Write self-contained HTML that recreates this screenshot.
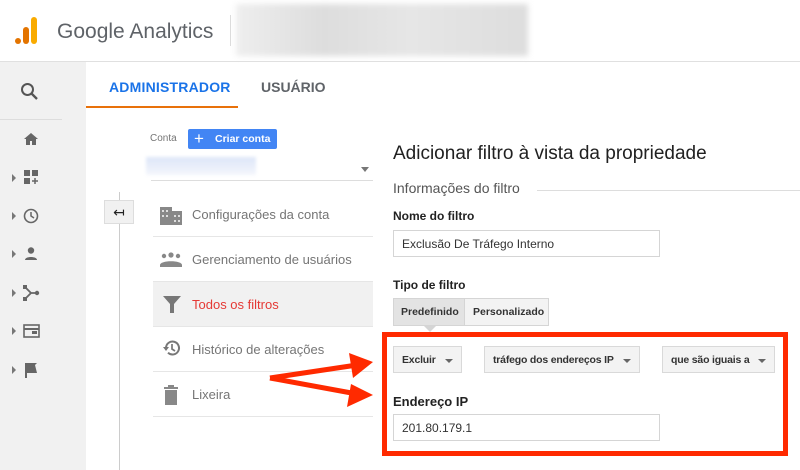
<!DOCTYPE html>
<html><head><meta charset="utf-8"><style>
*{margin:0;padding:0;box-sizing:border-box}
body{width:800px;height:470px;overflow:hidden;background:#fff;font-family:"Liberation Sans",Arial,sans-serif;position:relative}
.a{position:absolute;white-space:nowrap}
.mi{position:absolute;left:153px;width:220px;height:45px;border-bottom:1px solid #e6e6e6}
.mi span{position:absolute;left:39px;top:15px;font-size:13px;color:#757575}
.sel{position:absolute;top:346px;height:27px;background:#f3f3f3;border:1px solid #d9d9d9;font-size:10.5px;font-weight:bold;color:#333;padding:7px 0 0 8px;letter-spacing:-.2px}
.sel i{position:absolute;right:8px;top:12px;border:4px solid transparent;border-top:4px solid #666;border-bottom:0}
.tri{position:absolute;left:12px;border:4px solid transparent;border-left:4px solid #777;border-right:0}
</style></head><body>
<svg class="a" style="left:12px;top:15px" width="30" height="32"><circle cx="6" cy="26" r="3" fill="#e37400"/><rect x="11" y="12" width="6" height="17" rx="3" fill="#e37400"/><rect x="19" y="2" width="6" height="27" rx="3" fill="#f9ab00"/></svg>
<div class="a" style="left:57px;top:20px;font-size:21px;color:#5f6368">Google Analytics</div>
<div class="a" style="left:230px;top:15px;width:1px;height:31px;background:#ddd"></div>
<div class="a" style="left:236px;top:4px;width:292px;height:52px;background:linear-gradient(90deg,#eee,#ddd 30%,#e6e6e6 60%,#ddd);filter:blur(3px)"></div>
<div class="a" style="left:0;top:61px;width:800px;height:1px;background:#e0e0e0"></div>
<div class="a" style="left:0;top:62px;width:86px;height:408px;background:#f1f1f1"></div>
<svg class="a" style="left:20px;top:82px" width="20" height="20"><circle cx="7.5" cy="7.5" r="5.5" fill="none" stroke="#555" stroke-width="2"/><path d="M11.5 11.5 17 17" stroke="#555" stroke-width="2.3"/></svg>
<div class="a" style="left:0;top:119px;width:62px;height:1px;background:#ddd"></div>
<svg class="a" style="left:23px;top:132px" width="16" height="14"><path d="M8 1 1 7h2v6h4V9h2v4h4V7h2z" fill="#666"/></svg>
<div class="tri" style="top:174px"></div><svg class="a" style="left:24px;top:170px" width="16" height="16"><rect x="0" y="0" width="6" height="6" fill="#666"/><rect x="8" y="0" width="6" height="6" fill="#666"/><rect x="0" y="8" width="6" height="6" fill="#666"/><path d="M11 8v6M8 11h6" stroke="#666" stroke-width="1.5"/></svg>
<div class="tri" style="top:212px"></div><svg class="a" style="left:23px;top:208px" width="16" height="16"><circle cx="8" cy="8" r="6.5" fill="none" stroke="#666" stroke-width="1.6"/><path d="M8 4v4l3 2" fill="none" stroke="#666" stroke-width="1.5"/></svg>
<div class="tri" style="top:250px"></div><svg class="a" style="left:24px;top:246px" width="16" height="16"><circle cx="7" cy="4.5" r="3.2" fill="#666"/><path d="M1 14c0-4 12-4 12 0z" fill="#666"/></svg>
<div class="tri" style="top:289px"></div><svg class="a" style="left:23px;top:285px" width="18" height="16"><path d="M2 2 8 8 2 14M8 8h7" fill="none" stroke="#666" stroke-width="1.8"/><circle cx="14" cy="8" r="2.2" fill="#666"/><rect x="0" y="0" width="4" height="4" fill="#666"/><rect x="0" y="12" width="4" height="4" fill="#666"/></svg>
<div class="tri" style="top:327px"></div><svg class="a" style="left:23px;top:324px" width="18" height="14"><rect x="1" y="1" width="15" height="12" fill="none" stroke="#666" stroke-width="1.6"/><rect x="1" y="4" width="15" height="2" fill="#666"/><rect x="9" y="7" width="5" height="3" fill="#666"/></svg>
<div class="tri" style="top:366px"></div><svg class="a" style="left:24px;top:362px" width="16" height="16"><path d="M1 1h12l-2 2 2 8H3v5H1z" fill="#666"/></svg>
<div class="a" style="left:109px;top:79px;font-size:14px;color:#1a73e8;font-weight:bold;letter-spacing:.2px">ADMINISTRADOR</div>
<div class="a" style="left:261px;top:79px;font-size:14px;color:#5f6368;font-weight:bold">USUÁRIO</div>
<div class="a" style="left:86px;top:106px;width:152px;height:2px;background:#e8710a"></div>
<div class="a" style="left:150px;top:133px;font-size:10px;color:#757575">Conta</div>
<div class="a" style="left:188px;top:129px;width:89px;height:20px;background:#4285f4;border-radius:2px;color:#fff;font-size:10.5px;font-weight:bold;padding:4px 0 0 27px">Criar conta</div>
<div class="a" style="left:194px;top:131px;color:#fff;font-size:17px;line-height:16px">+</div>
<div class="a" style="left:146px;top:157px;width:110px;height:18px;background:linear-gradient(180deg,#dde6f8,#f4f6fc);filter:blur(1.5px)"></div>
<div class="a" style="left:361px;top:167px;border:4px solid transparent;border-top:5px solid #777;border-bottom:0"></div>
<div class="a" style="left:151px;top:180px;width:222px;height:1px;background:#ddd"></div>
<div class="a" style="left:119px;top:192px;width:1px;height:278px;background:#ccc"></div>
<div class="a" style="left:104px;top:200px;width:30px;height:24px;background:#f1f1f1;border:1px solid #ddd;font-size:14px;text-align:center;line-height:22px;color:#222">↤</div>
<div class="mi" style="top:192px"><span>Configurações da conta</span></div>
<svg class="a" style="left:160px;top:205px" width="22" height="20"><path d="M0 2h12v4h10v14H0z" fill="#888"/><g fill="#ddd"><rect x="2" y="5" width="2" height="2"/><rect x="6" y="5" width="2" height="2"/><rect x="2" y="10" width="2" height="2"/><rect x="6" y="10" width="2" height="2"/><rect x="14" y="10" width="2" height="2"/><rect x="18" y="10" width="2" height="2"/><rect x="14" y="15" width="2" height="2"/><rect x="18" y="15" width="2" height="2"/></g></svg>
<div class="mi" style="top:237px"><span>Gerenciamento de usuários</span></div>
<svg class="a" style="left:160px;top:252px" width="22" height="16"><circle cx="4" cy="4" r="2.2" fill="#888"/><circle cx="11" cy="3" r="2.6" fill="#888"/><circle cx="18" cy="4" r="2.2" fill="#888"/><path d="M0 13c0-5 22-5 22 0v2H0z" fill="#888"/></svg>
<div class="mi" style="top:282px;background:#f1f1f1"><span style="color:#e53935">Todos os filtros</span></div>
<svg class="a" style="left:162px;top:295px" width="20" height="20"><path d="M1 1h18l-7 8v9h-4V9z" fill="#777"/></svg>
<div class="mi" style="top:327px"><span>Histórico de alterações</span></div>
<svg class="a" style="left:163px;top:339px" width="18" height="18"><path d="M3 9a6.5 6.5 0 1 1 2 4.7" fill="none" stroke="#777" stroke-width="2"/><path d="M0 8h6L3 12z" fill="#777"/><path d="M9 5v5l3 2" fill="none" stroke="#777" stroke-width="1.7"/></svg>
<div class="mi" style="top:372px"><span>Lixeira</span></div>
<svg class="a" style="left:164px;top:385px" width="16" height="20"><rect x="0" y="2" width="14" height="2" fill="#888"/><rect x="4" y="0" width="6" height="2" fill="#888"/><rect x="1" y="5" width="12" height="15" fill="#888"/></svg>
<div class="a" style="left:393px;top:143px;font-size:19px;color:#212121">Adicionar filtro à vista da propriedade</div>
<div class="a" style="left:393px;top:180px;font-size:14px;color:#555">Informações do filtro</div>
<div class="a" style="left:537px;top:190px;width:263px;height:1px;background:#ddd"></div>
<div class="a" style="left:393px;top:209px;font-size:12px;font-weight:bold;color:#222">Nome do filtro</div>
<div class="a" style="left:393px;top:230px;width:267px;height:27px;border:1px solid #d5d5d5;font-size:12px;color:#333;padding:6px 0 0 8px">Exclusão De Tráfego Interno</div>
<div class="a" style="left:393px;top:278px;font-size:12px;font-weight:bold;color:#222">Tipo de filtro</div>
<div class="a" style="left:393px;top:298px;width:156px;height:28px;border:1px solid #d5d5d5;background:#f3f3f3"></div>
<div class="a" style="left:394px;top:299px;width:71px;height:26px;background:#e3e3e3;border-right:1px solid #d5d5d5;font-size:10.5px;font-weight:bold;color:#333;padding:7px 0 0 7px">Predefinido</div>
<div class="a" style="left:473px;top:306px;font-size:10.5px;font-weight:bold;color:#333">Personalizado</div>
<div class="a" style="left:424px;top:326px;border:6px solid transparent;border-top:6px solid #d5d5d5;border-bottom:0"></div>
<div class="a" style="left:382px;top:332px;width:406px;height:124px;border:5px solid #ff2a00"></div>
<div class="sel" style="left:393px;width:69px">Excluir<i></i></div>
<div class="sel" style="left:484px;width:156px">tráfego dos endereços IP<i></i></div>
<div class="sel" style="left:662px;width:113px">que são iguais a<i></i></div>
<div class="a" style="left:393px;top:394px;font-size:13px;font-weight:bold;color:#222">Endereço IP</div>
<div class="a" style="left:393px;top:414px;width:267px;height:27px;border:1px solid #d5d5d5;font-size:12px;color:#333;padding:6px 0 0 8px">201.80.179.1</div>
<svg class="a" style="left:265px;top:350px" width="120" height="60"><path d="M5 28 92 15" stroke="#ff2a00" stroke-width="5"/><path d="M5 28 92 44" stroke="#ff2a00" stroke-width="5"/><path d="M84 3 108 12 88 28z" fill="#ff2a00"/><path d="M86 34 108 45 82 57z" fill="#ff2a00"/></svg>
</body></html>
